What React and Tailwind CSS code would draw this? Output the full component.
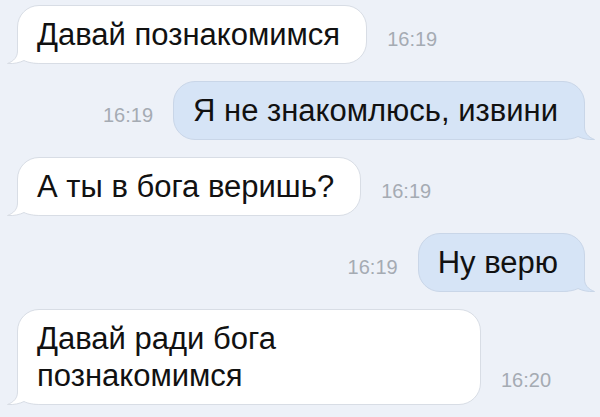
const messages = [
  { id: 1, out: false, text: 'Давай познакомимся', time: '16:19' },
  { id: 2, out: true, text: 'Я не знакомлюсь, извини', time: '16:19' },
  { id: 3, out: false, text: 'А ты в бога веришь?', time: '16:19' },
  { id: 4, out: true, text: 'Ну верю', time: '16:19' },
  { id: 5, out: false, text: 'Давай ради бога\nпознакомимся', time: '16:20', wide: true },
];

function Tail({ out }) {
  const fill = out ? '#d6e4f6' : '#ffffff';
  const stroke = out ? '#c9d6e8' : '#d8dde5';
  return (
    <svg
      width="36"
      height="26"
      viewBox="0 0 36 26"
      className={
        out
          ? 'absolute -right-[12px] -bottom-px -scale-x-100'
          : 'absolute -left-[12px] -bottom-px'
      }
    >
      <path
        d="M11.5 0 L11.5 13 C11.5 19 8 23 1.5 25.5 C8 26 14 24.5 18 22.5 C22 24.5 27 25.5 36 25.5 L36 0 Z"
        fill={fill}
      />
      <path
        d="M11.5 0 L11.5 13 C11.5 19 8 23 1.5 25.5 C8 26 14 24.5 18 22.5 C22 24.5 27 25.5 36 25.5"
        fill="none"
        stroke={stroke}
        strokeWidth="1"
      />
    </svg>
  );
}

function Message({ msg }) {
  const time = (
    <span className="mb-[15px] shrink-0 text-[20px] leading-none text-[#a5abb3]">{msg.time}</span>
  );
  return (
    <div className={`flex items-end gap-5 ${msg.out ? 'justify-end pr-[15px]' : 'pl-[17px]'}`}>
      {msg.out && time}
      <div
        className={`relative rounded-[22px] border py-[10px] pl-[19px] pr-[26px] text-[31px] leading-[37px] text-[#111] ${
          msg.out ? 'border-[#c9d6e8] bg-[#d6e4f6]' : 'border-[#d8dde5] bg-white'
        } ${msg.wide ? 'w-[464px]' : ''}`}
      >
        <Tail out={msg.out} />
        <span className="relative whitespace-pre-line">{msg.text}</span>
      </div>
      {!msg.out && time}
    </div>
  );
}

export default function App() {
  return (
    <div
      className="flex h-[417px] w-[600px] flex-col gap-[17px] overflow-hidden bg-[#edf1f8] pt-[5px]"
      style={{ fontFamily: '"Liberation Sans", Arial, sans-serif' }}
    >
      {messages.map((m) => (
        <Message key={m.id} msg={m} />
      ))}
    </div>
  );
}
